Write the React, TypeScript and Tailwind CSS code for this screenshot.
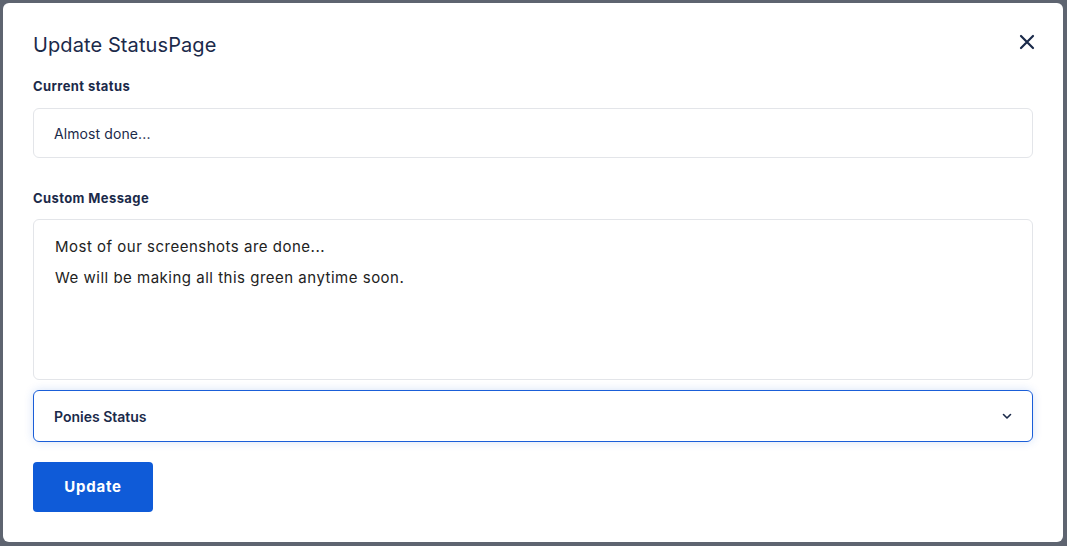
import React from "react";

export default function App() {
  return (
    <div
      className="w-[1067px] h-[546px] bg-[#5e6470] p-[3px] overflow-hidden"
      style={{ fontFamily: "Inter, 'Noto Sans', sans-serif" }}
    >
      <div className="w-[1060px] h-[539px] bg-white rounded-[6px] px-[30px] pt-[28px] flex flex-col">
        <div className="flex items-start justify-between">
          <h1 className="text-[20px] leading-[28px] text-[#1b2a4a] font-normal tracking-[0.1px]">
            Update StatusPage
          </h1>
          <button className="mt-[3px] mr-[-2px] text-[#1b2a4a]" aria-label="Close">
            <svg width="16" height="16" viewBox="0 0 16 16" fill="none">
              <path d="M2 2L14 14M14 2L2 14" stroke="currentColor" strokeWidth="2.2" strokeLinecap="round" />
            </svg>
          </button>
        </div>

        <label className="mt-[19px] text-[13px] leading-[16px] font-bold text-[#1b2a4a] tracking-[0.4px]">
          Current status
        </label>
        <div className="mt-[14px] h-[50px] w-[1000px] border border-[#e3e5e9] rounded-[6px] flex items-center pl-[20px] text-[14px] text-[#1b2a4a] tracking-[0.1px]">
          Almost done...
        </div>

        <label className="mt-[32px] text-[13px] leading-[16px] font-bold text-[#1b2a4a] tracking-[0.4px]">
          Custom Message
        </label>
        <div className="mt-[13px] h-[161px] w-[1000px] border border-[#e3e5e9] rounded-[6px] pl-[21px] pt-[15px] text-[15px] text-[#222] tracking-[0.5px]">
          <p className="leading-[24px]">Most of our screenshots are done...</p>
          <p className="leading-[24px] mt-[7px]">We will be making all this green anytime soon.</p>
        </div>

        <div className="mt-[10px] h-[52px] w-[1000px] border border-[#1a5ed8] rounded-[6px] flex items-center justify-between pl-[20px] pr-[20px] shadow-[0_0_10px_rgba(26,94,216,0.18)]">
          <span className="text-[14px] font-semibold text-[#1b2a4a]">Ponies Status</span>
          <svg width="10" height="7" viewBox="0 0 10 7" fill="none" className="text-[#1b2a4a]">
            <path d="M1.5 1.5L5 5L8.5 1.5" stroke="currentColor" strokeWidth="1.6" strokeLinecap="round" strokeLinejoin="round" />
          </svg>
        </div>

        <button className="mt-[20px] w-[120px] h-[50px] bg-[#0f5bd8] rounded-[4px] text-white text-[15px] font-bold tracking-[0.8px]">
          Update
        </button>
      </div>
    </div>
  );
}
